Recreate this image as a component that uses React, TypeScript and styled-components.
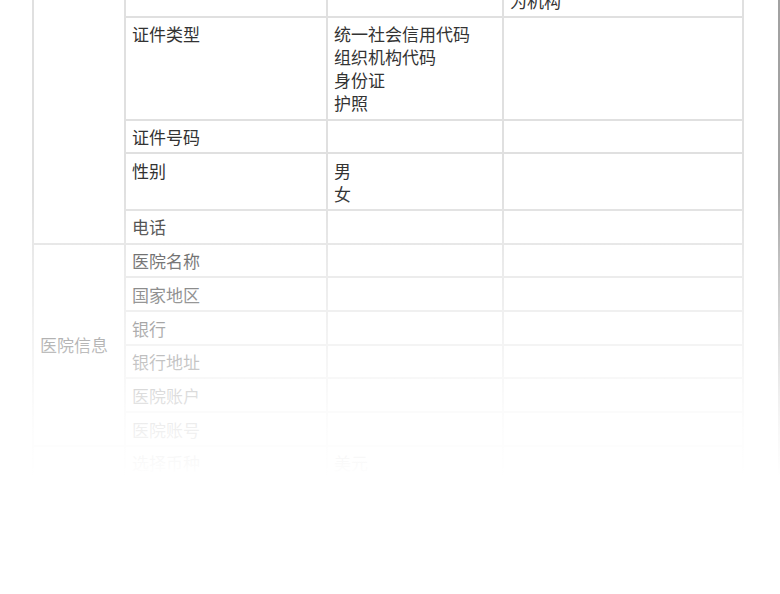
import React from "react";
import styled, { createGlobalStyle } from "styled-components";

const GlobalStyle = createGlobalStyle`
  html, body {
    margin: 0;
    padding: 0;
    background: #ffffff;
    overflow: hidden;
  }
  body {
    font-family: "Noto Sans CJK SC", "Noto Sans", sans-serif;
  }
`;

const Viewport = styled.div`
  position: relative;
  width: 780px;
  height: 594px;
  overflow: hidden;
  background: #ffffff;
`;

const Frame = styled.div`
  box-sizing: border-box;
  width: 780px;
  min-height: 594px;
  border-right: 2px solid #a2a2a2;
  padding-left: 32px;
`;

const Table = styled.table`
  margin-top: -344px;
  width: 712px;
  table-layout: fixed;
  border-collapse: collapse;
  border: 2px solid #e0e0e0;
  font-family: "Noto Sans CJK SC", sans-serif;
  font-size: 17px;
  line-height: 23px;
  color: #333333;
`;

const Cell = styled.td`
  border: 2px solid #e0e0e0;
  padding: 4.5px 8px 4.2px 6px;
  vertical-align: top;
  white-space: nowrap;
  overflow: hidden;
`;

const GroupCell = styled(Cell)`
  vertical-align: middle;
`;

const Line = styled.div`
  display: block;
`;

const Fade = styled.div`
  position: absolute;
  inset: 0;
  pointer-events: none;
  background: linear-gradient(
    to bottom,
    rgba(255, 255, 255, 0) 0px,
    rgba(255, 255, 255, 0) 190px,
    rgba(255, 255, 255, 0.33) 260px,
    rgba(255, 255, 255, 0.58) 327px,
    rgba(255, 255, 255, 0.83) 394px,
    rgba(255, 255, 255, 0.92) 428px,
    rgba(255, 255, 255, 0.97) 460px,
    rgba(255, 255, 255, 1) 476px,
    rgba(255, 255, 255, 1) 594px
  );
`;

type Row = { name: string; options?: string[]; note?: string[] };
type Group = { label: string; rows: Row[] };

const groups: Group[] = [
  {
    label: "申请人信息",
    rows: [
      { name: "申请人名称" },
      { name: "英文名称" },
      { name: "国家地区" },
      { name: "省市" },
      { name: "详细地址" },
      { name: "邮政编码" },
      { name: "联系人" },
      { name: "电子邮箱" },
      { name: "传真" },
      {
        name: "申请人类型",
        note: ["选择个人时为个人，选择机构时", "为机构"],
      },
      {
        name: "证件类型",
        options: ["统一社会信用代码", "组织机构代码", "身份证", "护照"],
      },
      { name: "证件号码" },
      { name: "性别", options: ["男", "女"] },
      { name: "电话" },
    ],
  },
  {
    label: "医院信息",
    rows: [
      { name: "医院名称" },
      { name: "国家地区" },
      { name: "银行" },
      { name: "银行地址" },
      { name: "医院账户" },
      { name: "医院账号" },
    ],
  },
  {
    label: "费用信息",
    rows: [
      { name: "选择币种", options: ["美元", "人民币"] },
      { name: "金额" },
      { name: "备注" },
    ],
  },
];

const Lines: React.FC<{ items?: string[] }> = ({ items }) => (
  <>
    {(items ?? []).map((t) => (
      <Line key={t}>{t}</Line>
    ))}
  </>
);

export default function App() {
  return (
    <>
      <GlobalStyle />
      <Viewport>
        <Frame>
          <Table>
            <colgroup>
              <col style={{ width: 92 }} />
              <col style={{ width: 202 }} />
              <col style={{ width: 176 }} />
              <col style={{ width: 240 }} />
            </colgroup>
            <tbody>
              {groups.map((g) =>
                g.rows.map((r, i) => (
                  <tr key={g.label + r.name}>
                    {i === 0 && (
                      <GroupCell rowSpan={g.rows.length}>{g.label}</GroupCell>
                    )}
                    <Cell>{r.name}</Cell>
                    <Cell>
                      <Lines items={r.options} />
                    </Cell>
                    <Cell>
                      <Lines items={r.note} />
                    </Cell>
                  </tr>
                ))
              )}
            </tbody>
          </Table>
        </Frame>
        <Fade />
      </Viewport>
    </>
  );
}
